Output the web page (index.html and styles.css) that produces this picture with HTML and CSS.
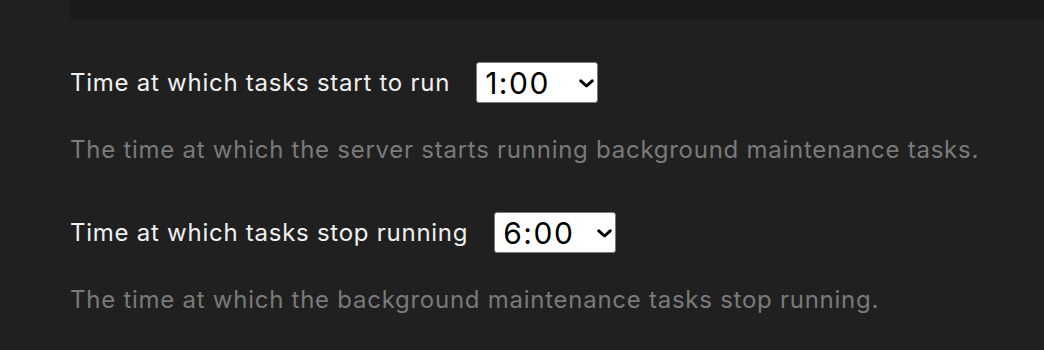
FILE: index.html
```html
<!DOCTYPE html>
<html lang="en">
<head>
    <meta charset="UTF-8">
    <title>Scheduled tasks</title>
    <link rel="stylesheet" href="styles.css">
</head>
<body>

<!--上面的面板-->
<div class="panel"></div>

<div class="settings">
    <div class="setting">
        <div class="row">
            <label class="label" for="start">Time at which tasks start to run</label>
            <div class="picker">
                <select id="start" class="time">
                    <option>0:00</option>
                    <option selected>1:00</option>
                    <option>2:00</option>
                    <option>3:00</option>
                </select>
                <svg class="chevron" width="15" height="9" viewBox="0 0 15 9"><path d="M1.8 1.8 L7.5 7 L13.2 1.8" fill="none" stroke="#000" stroke-width="3" stroke-linecap="round" stroke-linejoin="round"/></svg>
            </div>
        </div>
        <p class="desc">The time at which the server starts running background maintenance tasks.</p>
    </div>

    <div class="setting">
        <div class="row">
            <label class="label" for="stop">Time at which tasks stop running</label>
            <div class="picker">
                <select id="stop" class="time">
                    <option>5:00</option>
                    <option selected>6:00</option>
                    <option>7:00</option>
                </select>
                <svg class="chevron" width="15" height="9" viewBox="0 0 15 9"><path d="M1.8 1.8 L7.5 7 L13.2 1.8" fill="none" stroke="#000" stroke-width="3" stroke-linecap="round" stroke-linejoin="round"/></svg>
            </div>
        </div>
        <p class="desc">The time at which the background maintenance tasks stop running.</p>
    </div>
</div>

</body>
</html>
```

FILE: styles.css
```css
* {
margin: 0;
padding: 0;
}

body {
background-color: #202020;
font-family: Inter, "Noto Sans", sans-serif;
}

/*顶部的深色条*/
.panel {
height: 20px;
margin-left: 70px;
background-color: #1b1b1b;
}

.settings {
padding: 42px 0 0 70px;
}

.setting {
height: 150px;
}

.row {
display: flex;
align-items: center;
gap: 26px;
}

.label {
font-size: 24px;
letter-spacing: 0.74px;
color: #f0f0f0;
}

.picker {
position: relative;
}

.time {
-webkit-appearance: none;
appearance: none;
width: 122px;
height: 41px;
padding: 0 0 0 8px;
font-family: Inter, "Liberation Sans", sans-serif;
font-size: 30px;
letter-spacing: 1.5px;
color: #000;
background-color: #fff;
border: 1px solid #7a7a7a;
border-radius: 3px;
outline: none;
}

/*下拉箭头*/
.chevron {
position: absolute;
right: 4px;
top: 50%;
margin-top: -4px;
pointer-events: none;
}

.desc {
margin-top: 32px;
font-size: 24px;
letter-spacing: 0.74px;
color: #7a7a7a;
}
```
